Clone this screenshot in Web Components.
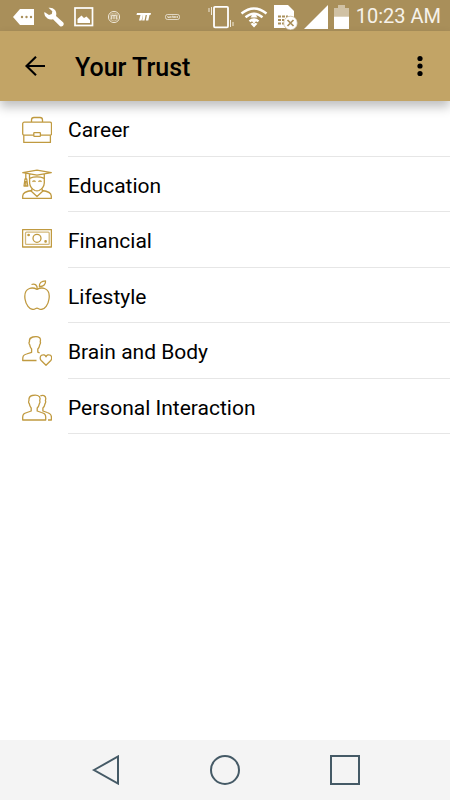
<!DOCTYPE html>
<html lang="en">
<head>
<meta charset="utf-8">
<meta name="viewport" content="width=device-width, initial-scale=1">
<title>Your Trust</title>
<style>
body {
    margin: 0;
    background: #fff;
    color: #000;
    font-family: Roboto, "Liberation Sans", sans-serif;
}
</style>
</head>
<body>

<trust-app>
    <status-bar slot="status" time="10:23 AM"></status-bar>
    <app-bar slot="header">Your Trust</app-bar>
    <trust-item icon="career">Career</trust-item>
    <trust-item icon="education">Education</trust-item>
    <trust-item icon="financial">Financial</trust-item>
    <trust-item icon="lifestyle">Lifestyle</trust-item>
    <trust-item icon="body">Brain and Body</trust-item>
    <trust-item icon="people">Personal Interaction</trust-item>
    <nav-bar slot="footer"></nav-bar>
</trust-app>

<script>
// Line icons, all on a 30x30 grid
const ICONS = {
    career: `
        <rect x=".7" y="8.2" width="28.8" height="13" rx="1.5"/>
        <path d="M1.8 21.2V28.4H28.4V21.2M9.5 8V6Q9.5 3.5 12 3.5H18Q20.5 3.5 20.5 6V8"/>
        <rect x="11.8" y="18.6" width="6.6" height="3.8" rx=".6" fill="#fff"/>`,
    education: `
        <path d="M.8 3.7L15 1.2L29.3 3.7L15 6.2ZM7.5 5V9.3Q15 6.5 22.3 9.3V5"/>
        <path d="M3.8 4.2V10M3 10H4.7L5.8 17H2ZM3.8 12V17"/>
        <path d="M7.6 9V14Q8 19 13 21.5Q15 22.3 17 21.5Q22 19 22.3 14V9"/>
        <path d="M10.5 12.7Q12 11 13.5 12.7M16.5 12.7Q18 11 19.5 12.7"/>
        <path d="M9.8 19.5V21.5Q1 22.5 .7 27V29.4H29.3V27Q29 22.5 20.2 21.5V19.5M8.8 21.8L15 27.5L21.2 21.8"/>`,
    financial: `
        <rect x=".6" y="4.6" width="28.8" height="17.4"/>
        <rect x="3.5" y="7.2" width="23.7" height="12.2" rx="1" opacity=".7"/>
        <circle cx="15" cy="13.3" r="4"/>
        <circle cx="6.6" cy="10" r=".7"/><circle cx="23.6" cy="16.4" r=".7"/>`,
    lifestyle: `
        <path d="M15 9.3C12.5 8 10 7.5 7.5 8.5C3.5 10 2.3 14 3 19C3.8 24.5 7.5 29.5 11 29.4C13 29.4 13.5 28.2 15 28.2C16.5 28.2 17 29.4 19 29.4C22.8 29.5 26.3 24.5 27 19C27.8 14 26.5 10 22.5 8.5C20 7.5 17.5 8 15 9.3Z"/>
        <path d="M9.5 4.5C13 3.5 15.5 5 15.2 9M17.4 6.5C17 3 19.5 .9 23.5 .8C24 4 21.5 6.8 17.4 6.5Z"/>`,
    body: `
        <path d="M14.5 24.5H.7C.7 20 1 19 4.5 18L9.6 16.3V13C8.2 11.5 7.9 10.2 7.7 8.6Q6.8 8.2 7.1 6.2L7.5 5.8C7 3 8.2 1.7 10.8 1C14.8 .2 18.1 .7 18.4 3.2Q18.6 4.5 18.2 6Q19 6.8 17.8 8.7C17.5 10.5 17 12 15.8 13V16.2L17.6 16.9"/>
        <path d="M24 29.3L19.2 24.5C17.8 23 17.8 20.4 19.5 19.3C21.3 18.2 23.2 19 24 20.8C24.8 19 26.7 18.2 28.5 19.3C30 20.4 30 23 28.8 24.5Z"/>`,
    people: `
        <path d="M.7 29V26C.8 23 2 22.5 5 21.5L9.2 20V17C8 15.7 7.6 14.5 7.3 12.7Q6.3 12.2 6.7 10L7 9.5C6.6 6.5 8 5.1 10.2 4.5C14.4 3.5 17.9 4.5 18.1 7.5L17.7 9.9Q18.6 10.7 17.3 12.9C17 14.7 16.4 16 15.2 17V20L19.4 21.5C22.5 22.5 23.6 23 23.7 26V29Z"/>
        <path d="M18.3 5C20.8 3.5 23.7 4.6 23.8 7.5L23.4 9.9Q24.2 10.7 23 12.9C22.7 14.7 22.1 16 20.9 17V20L25.2 21.5C28.5 22.5 29.3 23.5 29.4 26V29H26"/>`
};

class TrustApp extends HTMLElement {
    constructor() {
        super();
        this.attachShadow({ mode: 'open' }).innerHTML = `
        <style>
        :host {
            display: flex;
            flex-direction: column;
            min-height: 100vh;
        }
        main { flex: 1; }
        .list {
            display: grid;
            grid-auto-rows: 1fr;
            min-height: 333px;
        }
        </style>
        <slot name="status"></slot>
        <slot name="header"></slot>
        <main><div class="list" role="list"><slot></slot></div></main>
        <slot name="footer"></slot>`;
    }
}

class StatusBar extends HTMLElement {
    constructor() {
        super();
        this.attachShadow({ mode: 'open' }).innerHTML = `
        <style>
        :host {
            display: flex;
            align-items: center;
            justify-content: space-between;
            box-sizing: border-box;
            height: 31px;
            padding: 2px 9px 0 13px;
            background: #a98f5a;
            color: #fff;
        }
        div { display: flex; align-items: center; }
        .left { gap: 9px; }
        .right { gap: 6px; }
        svg { display: block; fill: none; stroke: #fff; }
        .solid { fill: #fff; stroke: none; }
        time { font-size: 20px; line-height: 29px; color: #f6f2ea; }
        </style>
        <div class="left">
            <svg class="solid" width="22" height="18"><path d="M0 9L7 1H21V17H7Z"/><g fill="#a98f5a"><circle cx="9" cy="9" r="1.2"/><circle cx="13.5" cy="9" r="1.2"/><circle cx="18" cy="9" r="1.2"/></g></svg>
            <svg class="solid" width="21" height="20"><path d="M.5 5Q-.5 9 3.5 11.5Q6 13 9 12.2L15.8 19Q17.5 20.2 19 18.7Q20.5 17 19 15.3L12 9Q13 5.5 11 3Q8.5 .2 4.5 .8L8.3 4.2L7.8 7L5 8Z"/></svg>
            <svg width="20" height="20"><rect x="1" y="1" width="17.5" height="17.5" stroke-width="1.7"/><path class="solid" d="M3.5 16V12L7.5 8.5L10 11L12.5 9.5L16 13V16Z"/></svg>
            <svg width="24" height="14"><g stroke="#eee6d6" transform="translate(4)"><circle cx="7" cy="7" r="5.6"/><circle cx="7" cy="7" r="4" stroke-width=".5"/><path d="M4.7 9.3V5.7Q6 4.6 7 5.7V9.3M7 5.7Q8.2 4.6 9.3 5.7V9.3" stroke-width="1.2"/></g></svg>
            <svg width="20" height="10"><path class="solid" d="M1 1H15L14.5 3H7L5.5 8.5H3L4.5 3H.5ZM7.2 2.5H9.8L8.5 8.5H6.2ZM11 2.5H13.6L12.3 8.5H9.9Z"/></svg>
            <svg width="16" height="8"><rect x=".5" y="1.5" width="14" height="5" rx="2" stroke-width=".8" opacity=".8"/><path d="M2.5 3L3.3 5L4.2 3.5L5 5L5.8 3M7 5V3.2H8.3V5M9.3 3V5M9.3 4H11M11 3V5M12.5 3V5" stroke-width=".6"/></svg>
        </div>
        <div class="right">
            <svg width="26" height="24"><rect x="6" y="1.8" width="14" height="20.5" rx="1" stroke-width="1.8"/><path d="M3.5 2V10M1 3V7M22.5 15V22M25 17V21" stroke="#f1eadc"/></svg>
            <svg width="28" height="24"><path d="M1.5 8.5Q14 -1.5 26.5 8.5M5.5 12.3Q14 5.3 22.5 12.3M9.5 16.3Q14 12.5 18.5 16.3" stroke-width="2.4"/><path class="solid" d="M14 22.5L10.5 18.8Q14 16.5 17.5 18.8ZM10.5 12.5L14 7.5L17.5 12.5ZM10.5 14L14 19L17.5 14Z" stroke="#a98f5a" stroke-width=".7"/></svg>
            <svg width="24" height="26"><path class="solid" d="M0 1H14L20 7V24H0Z"/><path d="M4 12.5H14M4 16H10M4 19.5H10" stroke="#a98f5a" stroke-width="2" stroke-dasharray="3 1"/><circle class="solid" cx="16.5" cy="19" r="7"/><circle cx="16.5" cy="19" r="6.8" stroke="#a98f5a" stroke-width=".5"/><path d="M13.5 16L19.5 22M19.5 16L13.5 22" stroke="#a98f5a" stroke-width="1.7"/></svg>
            <svg class="solid" width="24" height="24"><path d="M0 24L24 0V24Z"/></svg>
            <svg class="solid" width="16" height="24"><path d="M0 11.5V3H4V0H11V3H15V11.5Z" opacity=".45"/><path d="M0 11.5H15V24H0Z"/></svg>
            <time></time>
        </div>`;
        this.shadowRoot.querySelector('time').textContent = this.getAttribute('time');
    }
}

class AppBar extends HTMLElement {
    constructor() {
        super();
        this.attachShadow({ mode: 'open' }).innerHTML = `
        <style>
        :host {
            display: flex;
            align-items: center;
            height: 70px;
            padding: 0 15px;
            background: #c2a466;
            box-shadow: 0 6px 10px rgba(0, 0, 0, 0.25);
            z-index: 1;
        }
        button {
            display: grid;
            place-items: center;
            width: 40px;
            height: 40px;
            padding: 0;
            border: 0;
            background: none;
            color: inherit;
        }
        .more { width: 30px; }
        h1 {
            flex: 1;
            margin: 0 0 0 20px;
            padding-top: 4px;
            font-size: 25px;
            line-height: 32px;
            font-weight: 500;
        }
        </style>
        <button aria-label="Back"><svg width="22" height="22" fill="none" stroke="currentColor" stroke-width="2.1"><path d="M21 11H2.5M12 1.8L2.5 11L12 20.2"/></svg></button>
        <h1><slot></slot></h1>
        <button class="more" aria-label="More options"><svg width="6" height="22" fill="currentColor"><circle cx="3" cy="3.5" r="2.6"/><circle cx="3" cy="11" r="2.6"/><circle cx="3" cy="18.5" r="2.6"/></svg></button>`;
    }
}

class TrustItem extends HTMLElement {
    constructor() {
        super();
        this.attachShadow({ mode: 'open' }).innerHTML = `
        <style>
        :host { display: flex; }
        a {
            flex: 1;
            display: flex;
            gap: 16px;
            padding-left: 22px;
            color: inherit;
            text-decoration: none;
        }
        svg {
            align-self: center;
            width: 30px;
            height: 30px;
            fill: none;
            stroke: #c09a40;
            stroke-width: 1.3;
            stroke-linejoin: round;
        }
        span {
            flex: 1;
            display: flex;
            align-items: center;
            padding-top: 4px;
            border-bottom: 1px solid #e6e6e6;
            font-size: 21px;
            line-height: 28px;
        }
        </style>
        <a href="#"><svg viewBox="0 0 30 30" aria-hidden="true"></svg><span><slot></slot></span></a>`;
        this.shadowRoot.querySelector('svg').innerHTML = ICONS[this.getAttribute('icon')];
    }

    connectedCallback() {
        this.setAttribute('role', 'listitem');
    }
}

class NavBar extends HTMLElement {
    constructor() {
        super();
        this.attachShadow({ mode: 'open' }).innerHTML = `
        <style>
        :host {
            display: flex;
            justify-content: space-evenly;
            align-items: center;
            height: 60px;
            background: #f4f4f4;
        }
        button {
            padding: 0;
            border: 0;
            background: none;
        }
        svg {
            display: block;
            fill: none;
            stroke: #455a66;
            stroke-width: 2;
        }
        </style>
        <button aria-label="Back"><svg width="30" height="30"><path d="M4 15L28 1.5V28.5Z"/></svg></button>
        <button aria-label="Home"><svg width="30" height="30"><circle cx="15" cy="15" r="14"/></svg></button>
        <button aria-label="Recent apps"><svg width="30" height="30"><rect x="1" y="1" width="28" height="28"/></svg></button>`;
    }
}

customElements.define('trust-app', TrustApp);
customElements.define('status-bar', StatusBar);
customElements.define('app-bar', AppBar);
customElements.define('trust-item', TrustItem);
customElements.define('nav-bar', NavBar);
</script>
</body>
</html>
